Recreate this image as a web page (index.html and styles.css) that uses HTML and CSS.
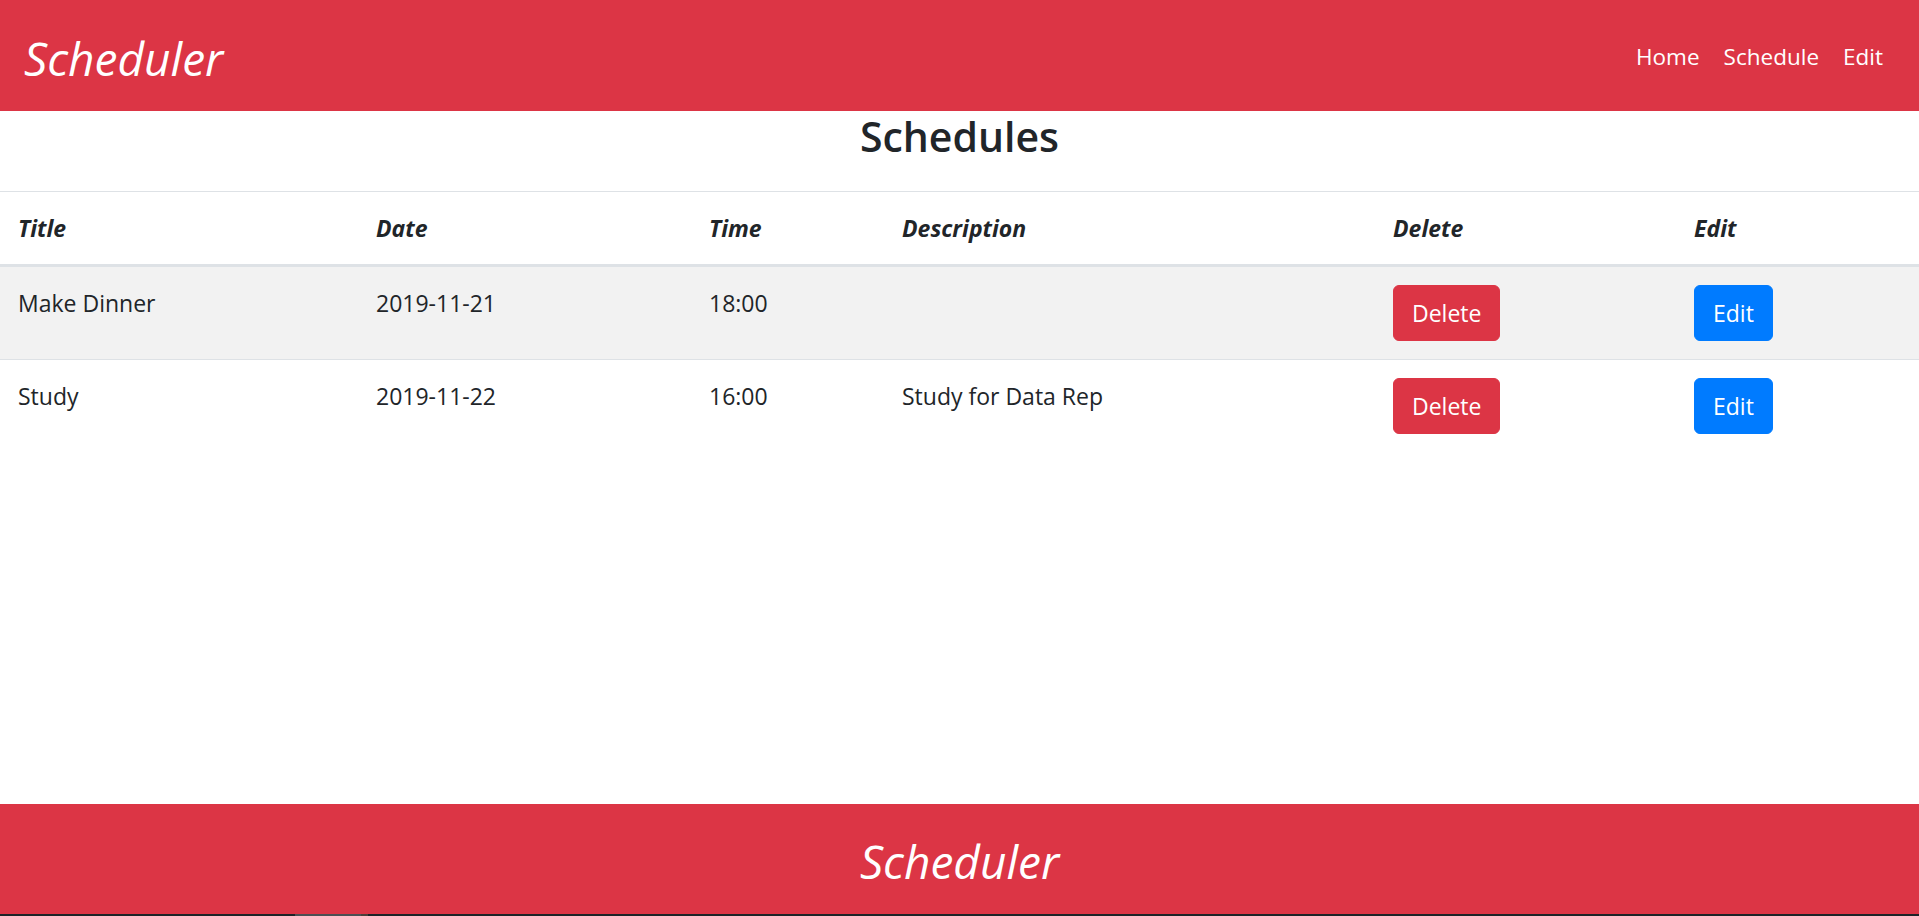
FILE: index.html
```html
<!DOCTYPE html>
<html lang="en">
<head>
<meta charset="utf-8">
<title>Scheduler</title>
<link rel="stylesheet" href="styles.css">
</head>
<body>
<div class="page">
  <header class="navbar">
    <a class="brand" href="#">Scheduler</a>
    <nav class="nav">
      <a class="nav-link" href="#">Home</a>
      <a class="nav-link" href="#">Schedule</a>
      <a class="nav-link" href="#">Edit</a>
    </nav>
  </header>
  <main class="main">
    <h3 class="heading">Schedules</h3>
    <table class="table">
      <colgroup>
        <col class="c-title">
        <col class="c-date">
        <col class="c-time">
        <col class="c-desc">
        <col class="c-del">
        <col class="c-edit">
      </colgroup>
      <thead>
        <tr>
          <th>Title</th>
          <th>Date</th>
          <th>Time</th>
          <th>Description</th>
          <th>Delete</th>
          <th>Edit</th>
        </tr>
      </thead>
      <tbody>
        <tr class="striped">
          <td>Make Dinner</td>
          <td>2019-11-21</td>
          <td>18:00</td>
          <td></td>
          <td><button class="btn btn-danger">Delete</button></td>
          <td><button class="btn btn-primary">Edit</button></td>
        </tr>
        <tr>
          <td>Study</td>
          <td>2019-11-22</td>
          <td>16:00</td>
          <td>Study for Data Rep</td>
          <td><button class="btn btn-danger">Delete</button></td>
          <td><button class="btn btn-primary">Edit</button></td>
        </tr>
      </tbody>
    </table>
  </main>
  <footer class="footer">
    <span class="footer-brand">Scheduler</span>
  </footer>
  <div class="taskbar"><span class="tb-seg"></span><span class="tb-seg2"></span></div>
</div>
</body>
</html>
```

FILE: styles.css
```css
* { box-sizing: border-box; }
html, body { margin: 0; padding: 0; }
body {
  font-family: "Open Sans", "Noto Sans", sans-serif;
  font-size: 24px;
  line-height: 1.5;
  color: #212529;
  background: #fff;
}
.page {
  display: flex;
  flex-direction: column;
  height: 916px;
  overflow: hidden;
}
.navbar {
  height: 111px;
  flex: none;
  background: #dc3545;
  display: flex;
  align-items: center;
  justify-content: space-between;
  padding: 0 24px 0 24px;
}
.brand {
  color: #fff;
  font-style: italic;
  font-size: 46px;
  text-decoration: none;
  line-height: 1;
  margin-top: 4px;
}
.nav { display: flex; margin-top: 3px; }
.nav-link {
  color: #fff;
  text-decoration: none;
  padding: 0 12px;
  font-size: 22.5px;
}
.main {
  flex: 1;
}
.heading {
  margin: 0;
  font-size: 41px;
  font-weight: 600;
  line-height: 50px;
  text-align: center;
  height: 80px;
}
.table {
  width: 100%;
  border-collapse: collapse;
  table-layout: fixed;
}
.c-title { width: 358px; }
.c-date { width: 333px; }
.c-time { width: 193px; }
.c-desc { width: 491px; }
.c-del { width: 301px; }
.c-edit { width: 243px; }
.table th, .table td {
  padding: 18px;
  vertical-align: top;
  text-align: left;
  border-top: 1px solid #dee2e6;
  font-size: 23px;
  line-height: 36px;
}
.table th {
  font-style: italic;
  font-weight: 700;
  border-bottom: 3px solid #dee2e6;
}
.striped td { background: #f2f2f2; }
.btn {
  font-family: inherit;
  font-size: 23px;
  line-height: 36px;
  padding: 9px 18px;
  border: 1.5px solid transparent;
  border-radius: 6px;
  color: #fff;
  cursor: pointer;
  display: inline-block;
  margin-top: 0;
}
.btn-danger { background: #dc3545; border-color: #dc3545; }
.btn-primary { background: #007bff; border-color: #007bff; }
.footer {
  height: 110px;
  flex: none;
  background: #dc3545;
  display: flex;
  align-items: center;
  justify-content: center;
}
.footer-brand {
  color: #fff;
  font-style: italic;
  font-size: 46px;
  line-height: 1;
  margin-top: 4px;
}
.taskbar {
  height: 2px;
  flex: none;
  background: #1b2327;
  display: flex;
  padding-left: 295px;
}
.tb-seg { width: 66px; background: #4b4f53; }
.tb-seg2 { width: 7px; background: #4a3f3a; }
```
